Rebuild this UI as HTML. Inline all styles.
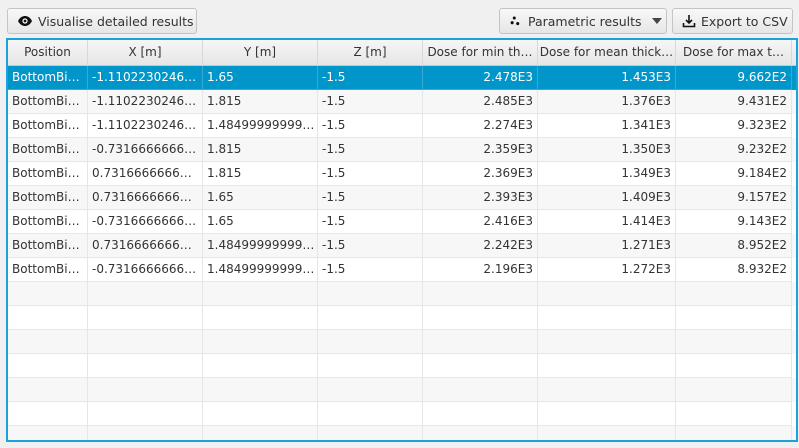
<!DOCTYPE html>
<html><head><style>
*{margin:0;padding:0;box-sizing:border-box}
body{width:799px;height:448px;background:#f0f0f0;font-family:"DejaVu Sans","Liberation Sans",sans-serif;font-size:12px;color:#333;position:relative;overflow:hidden}
.btn{position:absolute;top:8px;height:26px;border:1px solid #c4c4c4;border-radius:3px;background:linear-gradient(#f8f8f8,#e6e6e6);display:flex;align-items:center;padding-left:10px;font-size:12.5px;color:#333;white-space:nowrap}
.btn svg{flex-shrink:0}
.tbl{position:absolute;left:6px;top:38px;width:792px;height:404px;border:2px solid #1ea0d8;background:#fff;overflow:hidden}
.hdr{position:absolute;top:0;height:26px;border-right:1px solid #d8d8d8;border-bottom:1px solid #c8c8c8;background:linear-gradient(#f6f6f6,#e6e6e6);text-align:center;line-height:25px;font-size:12px;white-space:nowrap;overflow:hidden}
.row{position:absolute;left:0;width:790px;height:24px}
.c{position:absolute;top:0;height:24px;line-height:23px;border-right:1px solid #e6e6e6;border-bottom:1px solid #e6e6e6;padding:0 4px;white-space:nowrap;overflow:hidden;font-size:12px}
.r{text-align:right}
.sel{background:#0096c9;color:#fff}
.sel .c{border-color:#3aa9d2}
</style></head><body>
<div class="btn" style="left:7px;width:190px;padding-left:9px"><svg width="16" height="12" viewBox="0 0 16 12" style="margin-right:5px"><path d="M1 6C3 2 6 1 8 1s5 1 7 5c-2 4-5 5-7 5S3 10 1 6z" fill="#111"/><circle cx="8" cy="6" r="2.6" fill="#fff"/><circle cx="8" cy="6" r="1.4" fill="#111"/></svg>Visualise detailed results</div>
<div class="btn" style="left:499px;width:168px;padding-left:10px"><svg width="12" height="12" viewBox="0 0 14 12" style="margin-right:6px"><circle cx="5" cy="2.5" r="1.8" fill="#111"/><circle cx="2.5" cy="8" r="1.8" fill="#111"/><circle cx="9" cy="9" r="1.8" fill="#111"/></svg>Parametric results<svg width="10" height="6" style="margin-left:10px"><path d="M0 0h10L5 6z" fill="#444"/></svg></div>
<div class="btn" style="left:672px;width:121px;padding-left:9px"><svg width="14" height="14" viewBox="0 0 14 14" style="margin-right:5px"><path d="M7 1v8M4 6l3 3 3-3M1.5 9v3.5h11V9" stroke="#111" stroke-width="1.6" fill="none"/></svg>Export to CSV</div>
<div class="tbl">
<div class="hdr" style="left:0;width:80px">Position</div>
<div class="hdr" style="left:80px;width:115px">X [m]</div>
<div class="hdr" style="left:195px;width:115px">Y [m]</div>
<div class="hdr" style="left:310px;width:105px">Z [m]</div>
<div class="hdr" style="left:415px;width:115px">Dose for min th…</div>
<div class="hdr" style="left:530px;width:138px">Dose for mean thick…</div>
<div class="hdr" style="left:668px;width:116px">Dose for max t…</div>
<div class="hdr" style="left:784px;width:10px;border-right:none"></div>
<div id="rows"></div>
</div>
<script>
var d=[["-1.1102230246…","1.65","2.478E3","1.453E3","9.662E2"],["-1.1102230246…","1.815","2.485E3","1.376E3","9.431E2"],["-1.1102230246…","1.48499999999…","2.274E3","1.341E3","9.323E2"],["-0.7316666666…","1.815","2.359E3","1.350E3","9.232E2"],["0.7316666666…","1.815","2.369E3","1.349E3","9.184E2"],["0.7316666666…","1.65","2.393E3","1.409E3","9.157E2"],["-0.7316666666…","1.65","2.416E3","1.414E3","9.143E2"],["0.7316666666…","1.48499999999…","2.242E3","1.271E3","8.952E2"],["-0.7316666666…","1.48499999999…","2.196E3","1.272E3","8.932E2"]];
var L=[0,80,195,310,415,530,668],W=[80,115,115,105,115,138,116],h="";
for(var i=0;i<16;i++){var cls=i==0?"row sel":"row";var bg=i==0?"":(i%2?"background:#f7f7f7":"background:#fff");
h+='<div class="'+cls+'" style="top:'+(26+24*i)+'px;'+bg+'">';
var r=d[i];var v=r?["BottomBi…",r[0],r[1],"-1.5",r[2],r[3],r[4]]:["","","","","","",""];
for(var j=0;j<7;j++)h+='<div class="c'+(j>=4?' r':'')+'" style="left:'+L[j]+'px;width:'+W[j]+'px">'+v[j]+'</div>';
h+='</div>';}
document.getElementById("rows").innerHTML=h;
</script>
</body></html>
